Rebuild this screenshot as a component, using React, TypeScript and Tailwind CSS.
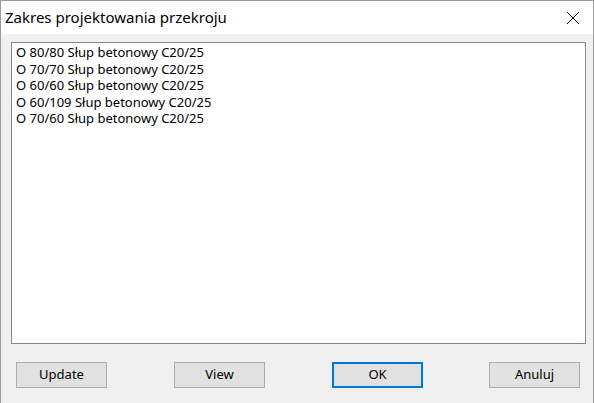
import React from "react";

const items = [
  "O 80/80 Słup betonowy C20/25",
  "O 70/70 Słup betonowy C20/25",
  "O 60/60 Słup betonowy C20/25",
  "O 60/109 Słup betonowy C20/25",
  "O 70/60 Słup betonowy C20/25",
];

function Btn({ label, primary }: { label: string; primary?: boolean }) {
  return (
    <div
      className={
        "w-[91px] h-[26px] bg-[#e1e1e1] flex items-center justify-center text-[13px] text-black " +
        (primary ? "border-2 border-[#0078d7]" : "border border-[#adadad]")
      }
    >
      {label}
    </div>
  );
}

export default function App() {
  return (
    <div
      className="w-[594px] h-[403px] bg-[#f0f0f0] border-x border-t border-[#9a9a9a] flex flex-col overflow-hidden"
      style={{ fontFamily: '"Noto Sans", "Open Sans", sans-serif' }}
    >
      <div className="h-[33px] bg-white flex items-center justify-between pl-[4px] pr-[13px] shrink-0">
        <span className="text-[15px] text-black leading-none">Zakres projektowania przekroju</span>
        <svg width="14" height="14" viewBox="0 0 14 14">
          <path d="M1 1 L13 13 M13 1 L1 13" stroke="#000" strokeWidth="1" />
        </svg>
      </div>
      <div className="pl-[10px] pt-[8px]">
        <div className="w-[575px] h-[302px] bg-white border border-[#828790] pl-[4px] pt-[1px]">
          {items.map((t) => (
            <div key={t} className="h-[16.5px] leading-[16.5px] text-[13px] text-black whitespace-nowrap">
              {t}
            </div>
          ))}
        </div>
      </div>
      <div className="flex pl-[15px] pt-[18px] gap-[67px]">
        <Btn label="Update" />
        <Btn label="View" />
        <Btn label="OK" primary />
        <div className="-ml-[1px]">
          <Btn label="Anuluj" />
        </div>
      </div>
    </div>
  );
}
